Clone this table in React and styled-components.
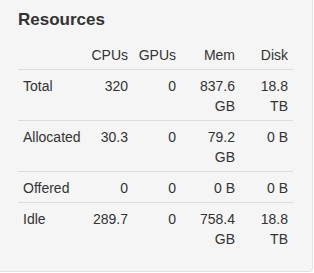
import React from "react";
import styled, { createGlobalStyle } from "styled-components";

const GlobalStyle = createGlobalStyle`
  body {
    margin: 0;
    background: #fff;
    font-family: "Liberation Sans", Arial, sans-serif;
    color: #333;
  }
`;

const Panel = styled.div`
  box-sizing: border-box;
  width: 313px;
  height: 272px;
  padding: 10px 19px 0 18px;
  background: #f5f5f5;
  border-right: 1px solid #e3e3e3;
  border-bottom: 1px solid #e3e3e3;
  border-bottom-right-radius: 4px;
`;

const Title = styled.h3`
  margin: 0 0 10px;
  font-size: 17px;
  line-height: 20px;
  font-weight: bold;
  color: #333;
`;

const Table = styled.table`
  width: 275px;
  border-collapse: collapse;
  table-layout: fixed;
  font-size: 14px;
  line-height: 20px;
`;

const Head = styled.th`
  padding: 5px 5px 4px;
  font-weight: normal;
  text-align: ${(p) => (p.left ? "left" : "right")};
  border-bottom: 1px solid #ddd;
`;

const Cell = styled.td`
  padding: 6px 5px 4px;
  vertical-align: top;
  text-align: ${(p) => (p.left ? "left" : "right")};
  border-top: ${(p) => (p.first ? "none" : "1px solid #ddd")};
`;

const rows = [
  { name: "Total", cpus: "320", gpus: "0", mem: "837.6 GB", disk: "18.8 TB" },
  { name: "Allocated", cpus: "30.3", gpus: "0", mem: "79.2 GB", disk: "0 B" },
  { name: "Offered", cpus: "0", gpus: "0", mem: "0 B", disk: "0 B" },
  { name: "Idle", cpus: "289.7", gpus: "0", mem: "758.4 GB", disk: "18.8 TB" },
];

export default function App() {
  return (
    <>
      <GlobalStyle />
      <Panel>
        <Title>Resources</Title>
        <Table>
          <colgroup>
            <col style={{ width: 68 }} />
            <col style={{ width: 47 }} />
            <col style={{ width: 48 }} />
            <col style={{ width: 59 }} />
            <col style={{ width: 53 }} />
          </colgroup>
          <thead>
            <tr>
              <Head left></Head>
              <Head>CPUs</Head>
              <Head>GPUs</Head>
              <Head>Mem</Head>
              <Head>Disk</Head>
            </tr>
          </thead>
          <tbody>
            {rows.map((row, index) => (
              <tr key={row.name}>
                <Cell left first={index === 0}>{row.name}</Cell>
                <Cell first={index === 0}>{row.cpus}</Cell>
                <Cell first={index === 0}>{row.gpus}</Cell>
                <Cell first={index === 0}>{row.mem}</Cell>
                <Cell first={index === 0}>{row.disk}</Cell>
              </tr>
            ))}
          </tbody>
        </Table>
      </Panel>
    </>
  );
}
